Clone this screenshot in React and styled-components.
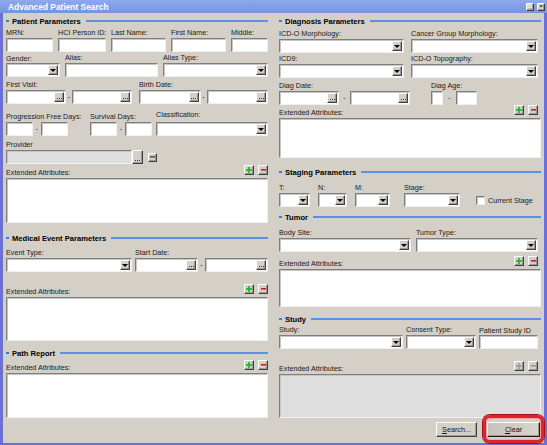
import React from 'react';
import styled, { createGlobalStyle, css } from 'styled-components';

const Global = createGlobalStyle`
  html, body { margin: 0; padding: 0; background: #d4d0c8; }
  body { font-family: "Liberation Sans", Arial, sans-serif; }
  * { box-sizing: border-box; }
`;

const raised = css`
  background: #d4d0c8;
  border: 1px solid;
  border-color: #ffffff #404040 #404040 #ffffff;
  box-shadow: inset -1px -1px 0 #9a9a9a;
`;

const sunken = css`
  border: 1px solid;
  border-color: #7e7e7e #f0f0f0 #f0f0f0 #7e7e7e;
  box-shadow: inset 1px 1px 0 #c6c6c6;
`;

const Window = styled.div`
  width: 547px;
  height: 445px;
  display: flex;
  flex-direction: column;
  background: #d4d0c8;
  overflow: hidden;
  font-family: "Liberation Sans", Arial, sans-serif;
  font-size: 7.2px;
  color: #1a1a1a;
`;

const TitleBar = styled.div`
  height: 13px;
  flex: none;
  display: flex;
  align-items: center;
  justify-content: space-between;
  padding: 0 2px 0 8px;
  background: linear-gradient(#8ea9ee, #7593e0);
`;

const TitleText = styled.span`
  color: #ffffff;
  font-weight: bold;
  font-size: 8.4px;
`;

const TitleButtons = styled.div`
  display: flex;
  gap: 3px;
`;

const TitleButton = styled.span`
  width: 8px;
  height: 8px;
  ${raised};
  background: #dcdcdc;
  font-size: 6px;
  line-height: 5px;
  text-align: center;
  color: #222;
  font-weight: bold;
`;

const Frame = styled.div`
  flex: 1;
  display: flex;
  gap: 5px;
  border: 3px solid #6b70d6;
  border-top: none;
  border-bottom-width: 2px;
`;

const Column = styled.div`
  width: 268px;
  flex: none;
  display: flex;
  flex-direction: column;
  padding: 0 3px;
`;

const SectionHead = styled.div`
  height: 10px;
  flex: none;
  margin-top: ${p => p.mt || 0}px;
  display: flex;
  align-items: center;
  gap: 3px;
  font-weight: bold;
  font-size: 7.6px;
  color: #000;
  white-space: nowrap;
  &::before {
    content: '';
    width: 3px;
    height: 2px;
    background: #3f78e0;
  }
  &::after {
    content: '';
    flex: 1;
    height: 2px;
    margin-left: 2px;
    background: #5b8fe9;
  }
`;

const Row = styled.div`
  display: flex;
  flex: none;
  gap: ${p => p.gap || 0}px;
  margin-top: ${p => p.mt || 0}px;
  padding-right: ${p => p.pr || 0}px;
`;

const Field = styled.div`
  display: flex;
  flex-direction: column;
  flex: ${p => (p.w ? `0 0 ${p.w}px` : '1 1 0')};
  margin-left: ${p => p.ml || 0}px;
  min-width: 0;
`;

const Label = styled.div`
  height: 10px;
  line-height: 10px;
  white-space: nowrap;
  transform: translateY(${p => p.dy || 0}px);
`;

const TextBox = styled.input.attrs({ readOnly: true, type: 'text' })`
  ${sunken};
  appearance: none;
  outline: none;
  margin: 0;
  padding: 0;
  font: inherit;
  height: 14px;
  width: ${p => (p.w ? `${p.w}px` : '100%')};
  flex: none;
  background: ${p => (p.disabled ? '#dedede' : '#ffffff')};
`;

const SelectBox = styled.div`
  ${sunken};
  height: 14px;
  background: #ffffff;
  display: flex;
  justify-content: flex-end;
  padding: 1px;
`;

const DropBtn = styled.span`
  width: 10px;
  ${raised};
  display: flex;
  align-items: center;
  justify-content: center;
  &::after {
    content: '';
    border-left: 3px solid transparent;
    border-right: 3px solid transparent;
    border-top: 3px solid #000;
  }
`;

const DotBtn = styled.span`
  width: ${p => p.w || 10}px;
  height: ${p => (p.tall ? '14px' : 'auto')};
  flex: none;
  ${raised};
  display: flex;
  align-items: flex-end;
  justify-content: center;
  padding-bottom: 2px;
`;

const Range = styled.div`
  display: grid;
  grid-template-columns: ${p => p.cols};
  align-items: center;
`;

const Dash = styled.span`
  text-align: center;
  line-height: 14px;
  font-size: 7px;
`;

const ExtHead = styled.div`
  height: 13px;
  flex: none;
  margin-top: ${p => p.mt || 0}px;
  padding-right: ${p => p.pr || 0}px;
  display: flex;
  justify-content: space-between;
`;

const ExtLabel = styled.span`
  align-self: flex-end;
  line-height: 10px;
  white-space: nowrap;
`;

const PMButtons = styled.div`
  display: flex;
  gap: 4px;
  align-self: flex-start;
`;

const SquareBtn = styled.button`
  width: ${p => p.size || 10}px;
  height: ${p => p.size || 10}px;
  ${raised};
  padding: 0;
  margin: 0;
  display: flex;
  align-items: center;
  justify-content: center;
  flex: none;
  align-self: ${p => p.align || 'auto'};
  margin-left: ${p => p.ml || 0}px;
`;

const TextArea = styled.div`
  ${sunken};
  flex: none;
  height: ${p => p.h}px;
  background: ${p => (p.disabled ? '#dedede' : '#ffffff')};
`;

const CheckWrap = styled.div`
  display: flex;
  align-items: center;
  gap: 3px;
  align-self: flex-end;
  height: 14px;
  margin-left: ${p => p.ml || 0}px;
  white-space: nowrap;
`;

const CheckBox = styled.span`
  ${sunken};
  width: 9px;
  height: 9px;
  background: #fff;
`;

const ButtonBar = styled.div`
  display: flex;
  justify-content: flex-end;
  gap: 10px;
  margin-top: 4px;
  padding-right: 1px;
`;

const PushButton = styled.button`
  height: 15px;
  width: ${p => p.w}px;
  ${raised};
  padding: 0;
  margin: 0;
  font-family: "Liberation Sans", Arial, sans-serif;
  font-size: 7.2px;
  color: #111;
  ${p => p.primary && css`
    border-color: #ffffff #1a1a1a #1a1a1a #ffffff;
    background: linear-gradient(90deg, #c8c4bc, #d8d4cc);
  `}
  u { text-decoration: underline; }
`;

const HighlightWrap = styled.div`
  position: relative;
  display: flex;
`;

const Ring = styled.span`
  position: absolute;
  left: -4px;
  right: -4px;
  top: -7px;
  bottom: -6px;
  border: 3px solid #e0222a;
  border-radius: 7px;
  box-shadow: 0 0 0 1px #a0151a, inset 0 0 0 1px #f7a3a3;
  pointer-events: none;
`;

const Dots = () => (
  <svg width="5" height="1" viewBox="0 0 5 1">
    <rect x="0" y="0" width="1" height="1" fill="#3a3a3a" />
    <rect x="2" y="0" width="1" height="1" fill="#3a3a3a" />
    <rect x="4" y="0" width="1" height="1" fill="#3a3a3a" />
  </svg>
);

const PlusIcon = ({ off }) => (
  <svg width="6" height="6" viewBox="0 0 6 6">
    <rect x="2.2" y="0" width="1.6" height="6" fill={off ? '#9c9c9c' : '#14b814'} />
    <rect x="0" y="2.2" width="6" height="1.6" fill={off ? '#9c9c9c' : '#14b814'} />
  </svg>
);

const MinusIcon = ({ off, color }) => (
  <svg width="5" height="2" viewBox="0 0 5 2">
    <rect x="0" y="0" width="5" height="1.6" fill={off ? '#9c9c9c' : color || '#e01818'} />
  </svg>
);

const Select = () => (
  <SelectBox>
    <DropBtn />
  </SelectBox>
);

const DateInput = () => (
  <SelectBox>
    <DotBtn><Dots /></DotBtn>
  </SelectBox>
);

const DateRange = ({ cols }) => (
  <Range cols={cols}>
    <DateInput />
    <Dash>-</Dash>
    <DateInput />
  </Range>
);

const NumRange = ({ cols }) => (
  <Range cols={cols}>
    <TextBox />
    <Dash>-</Dash>
    <TextBox />
  </Range>
);

const Extended = ({ mt, h, pr, disabled }) => (
  <>
    <ExtHead mt={mt} pr={pr}>
      <ExtLabel>Extended Attributes:</ExtLabel>
      <PMButtons>
        <SquareBtn><PlusIcon off={disabled} /></SquareBtn>
        <SquareBtn><MinusIcon off={disabled} /></SquareBtn>
      </PMButtons>
    </ExtHead>
    <TextArea h={h} disabled={disabled} />
  </>
);

export default function App() {
  return (
    <>
      <Global />
      <Window>
        <TitleBar>
          <TitleText>Advanced Patient Search</TitleText>
          <TitleButtons>
            <TitleButton>_</TitleButton>
            <TitleButton>×</TitleButton>
          </TitleButtons>
        </TitleBar>
        <Frame>
          <Column>
            <SectionHead mt={3}>Patient Parameters</SectionHead>
            <Row mt={2} gap={5}>
              <Field w={47}><Label>MRN:</Label><TextBox /></Field>
              <Field w={48}><Label>HCI Person ID:</Label><TextBox /></Field>
              <Field w={55}><Label>Last Name:</Label><TextBox /></Field>
              <Field w={55}><Label>First Name:</Label><TextBox /></Field>
              <Field><Label>Middle:</Label><TextBox /></Field>
            </Row>
            <Row mt={1} gap={5}>
              <Field w={54}><Label dy={1}>Gender:</Label><Select /></Field>
              <Field w={93}><Label>Alias:</Label><TextBox /></Field>
              <Field><Label>Alias Type:</Label><Select /></Field>
            </Row>
            <Row mt={3} gap={7}>
              <Field w={126}><Label>First Visit:</Label><DateRange cols="1fr 6px 1fr" /></Field>
              <Field><Label>Birth Date:</Label><DateRange cols="1fr 6px 1fr" /></Field>
            </Row>
            <Row mt={8}>
              <Field w={62}><Label>Progression Free Days:</Label><NumRange cols="1fr 8px 1fr" /></Field>
              <Field w={62} ml={22}><Label>Survival Days:</Label><NumRange cols="1fr 8px 1fr" /></Field>
              <Field ml={4}><Label dy={-2}>Classification:</Label><Select /></Field>
            </Row>
            <Row mt={4}>
              <Field>
                <Label>Provider</Label>
                <Row>
                  <TextBox w={126} disabled />
                  <DotBtn w={11} tall><Dots /></DotBtn>
                  <SquareBtn size={9} ml={5} align="center"><MinusIcon color="#555" /></SquareBtn>
                </Row>
              </Field>
            </Row>
            <Extended mt={1} h={45} />

            <SectionHead mt={10}>Medical Event Parameters</SectionHead>
            <Row mt={5} gap={3}>
              <Field w={126}><Label>Event Type:</Label><Select /></Field>
              <Field><Label>Start Date:</Label><DateRange cols="1fr 7px 1fr" /></Field>
            </Row>
            <Extended mt={12} h={44} />

            <SectionHead mt={7}>Path Report</SectionHead>
            <Extended mt={2} h={45} />
          </Column>

          <Column>
            <SectionHead mt={3}>Diagnosis Parameters</SectionHead>
            <Row mt={3} gap={7} pr={3}>
              <Field w={125}><Label>ICD-O Morphology:</Label><Select /></Field>
              <Field><Label>Cancer Group Morphology:</Label><Select /></Field>
            </Row>
            <Row mt={1} gap={7} pr={3}>
              <Field w={125}><Label>ICD9:</Label><Select /></Field>
              <Field><Label>ICD-O Topography:</Label><Select /></Field>
            </Row>
            <Row mt={3} gap={21} pr={3}>
              <Field w={131}><Label>Diag Date:</Label><DateRange cols="1fr 11px 1fr" /></Field>
              <Field w={46}><Label>Diag Age:</Label><NumRange cols="12px 13px 1fr" /></Field>
            </Row>
            <Extended mt={0} h={40} pr={3} />

            <SectionHead mt={9}>Staging Parameters</SectionHead>
            <Row mt={6} gap={8}>
              <Field w={31}><Label>T:</Label><Select /></Field>
              <Field w={29}><Label>N:</Label><Select /></Field>
              <Field w={35}><Label>M:</Label><Select /></Field>
              <Field w={56} ml={6}><Label>Stage:</Label><Select /></Field>
              <CheckWrap ml={8}><CheckBox />Current Stage</CheckWrap>
            </Row>

            <SectionHead mt={5}>Tumor</SectionHead>
            <Row mt={6} gap={5} pr={3}>
              <Field w={132}><Label>Body Site:</Label><Select /></Field>
              <Field><Label>Tumor Type:</Label><Select /></Field>
            </Row>
            <Extended mt={4} h={38} pr={3} />

            <SectionHead mt={7}>Study</SectionHead>
            <Row mt={1} gap={3} pr={3}>
              <Field w={124}><Label>Study:</Label><Select /></Field>
              <Field w={70}><Label>Consent Type:</Label><Select /></Field>
              <Field><Label dy={1}>Patient Study ID</Label><TextBox /></Field>
            </Row>
            <Extended mt={12} h={44} pr={3} disabled />

            <ButtonBar>
              <PushButton w={41}><u>S</u>earch...</PushButton>
              <HighlightWrap>
                <PushButton w={53} primary><u>C</u>lear</PushButton>
                <Ring />
              </HighlightWrap>
            </ButtonBar>
          </Column>
        </Frame>
      </Window>
    </>
  );
}
